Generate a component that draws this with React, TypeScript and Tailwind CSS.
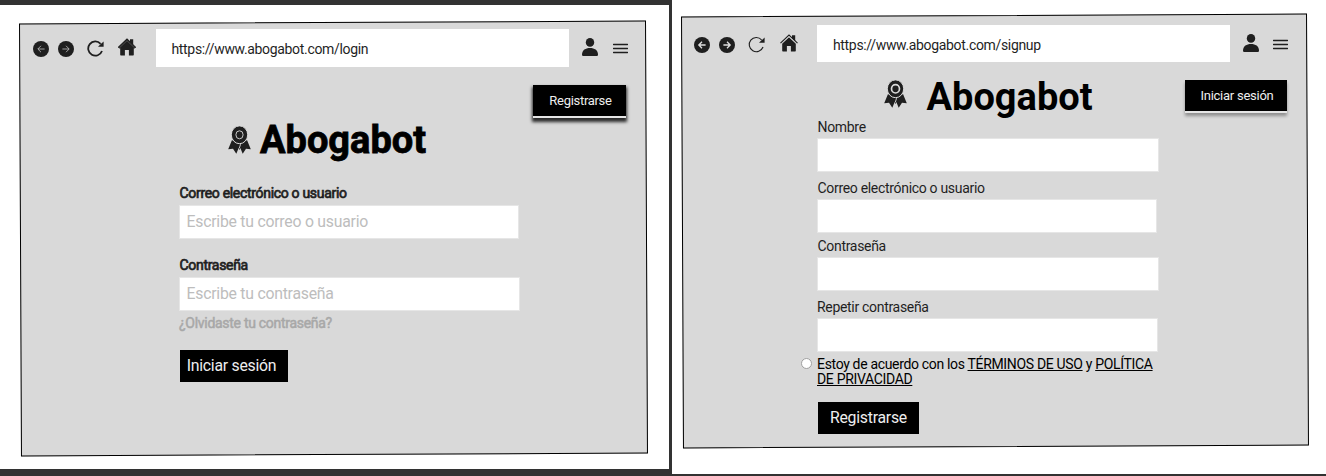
import type { ReactNode } from "react";

function ArrowCircle({ flip = false, strong = false }: { flip?: boolean; strong?: boolean }) {
  return (
    <svg viewBox="0 0 16 16" className={flip ? "size-4 -scale-x-100" : "size-4"}>
      <circle cx="8" cy="8" r="8" fill="#1f1f1f" />
      <path
        d="M11.6 8H5M8 4.8L4.8 8l3.2 3.2"
        fill="none"
        stroke={strong ? "#e0e0e0" : "#c0c0c0"}
        strokeWidth={strong ? 1.3 : 0.8}
      />
    </svg>
  );
}

function Reload({ strong = false }: { strong?: boolean }) {
  return (
    <svg viewBox="0 0 17 17" className="size-[17px]">
      <path
        d="M13.6 3.8A7.1 7.1 0 1 0 15 11"
        fill="none"
        stroke="#1f1f1f"
        strokeWidth={strong ? 1.8 : 1.1}
      />
      <path d="M16.6 1.6v5.2h-5.6l2-2z" fill="#1f1f1f" />
    </svg>
  );
}

function House({ solid = false }: { solid?: boolean }) {
  return (
    <svg viewBox="0 0 18 18" className="size-[18px]">
      <path d="M9 3.2L2.2 9.4V16.8Q2.2 17.5 2.9 17.5H6.9V12H10.9V17.5H15.1Q15.8 17.5 15.8 16.8V9.4Z" fill="#1f1f1f" />
      <path d="M12 1.2H15.2V7L12 4Z" fill="#1f1f1f" />
      <path d={solid ? "M0.5 9.2L9 1.1L17.5 9.2L16 10L9 3.6L2 10Z" : "M0.5 9.1L9 1L17.5 9.1"} fill={solid ? "#1f1f1f" : "none"} stroke="#1f1f1f" strokeWidth="1.1" />
      <path d="M1.4 9.9L9 2.7L16.6 9.9" fill="none" stroke={solid ? "#777" : "#c8c8c8"} strokeWidth={solid ? 0.5 : 0.8} />
    </svg>
  );
}

function Person() {
  return (
    <svg viewBox="0 0 16 18" className="h-[18px] w-4">
      <ellipse cx="8" cy="4.4" rx="4.2" ry="4.4" fill="#1f1f1f" />
      <path d="M0 16.4C0 12 3.6 9.9 8 9.9s8 2.1 8 6.5c0 1-.6 1.6-1.6 1.6H1.6C.6 18 0 17.4 0 16.4z" fill="#1f1f1f" />
    </svg>
  );
}

function Menu() {
  return (
    <svg viewBox="0 0 15 11" className="h-[11px] w-[15px]">
      <path d="M0.5 1.5H14.5M0.5 5.5H14.5M0.5 9.5H14.5" stroke="#1f1f1f" strokeWidth="1.5" strokeLinecap="round" />
    </svg>
  );
}

function Award({ thin = false }: { thin?: boolean }) {
  return (
    <svg viewBox="0 0 23 28" className="h-7 w-[23px]">
      <path d="M4 14L0.2 23.2L5 22.8L8.3 27.8L11.5 20L14.7 27.8L18 22.8L22.8 23.2L19 14L11.5 18Z" fill="#1f1f1f" />
      <path d="M11.5 17L10 21L11.5 24L13 21Z" fill="#1f1f1f" />
      <ellipse cx="11.5" cy="8.8" rx="8.2" ry="8.9" fill="#1f1f1f" stroke="#d9d9d9" strokeWidth="1" />
      <ellipse cx="11.5" cy="8.8" rx={thin ? 3.6 : 4} ry={thin ? 4 : 4.2} fill="none" stroke="#d9d9d9" strokeWidth={thin ? 0.9 : 1.7} />
      <path d="M12.6 18.2L11.2 22.5" stroke="#d9d9d9" strokeWidth="0.9" />
    </svg>
  );
}

function Toolbar({ url, login = false }: { url: string; login?: boolean }) {
  return (
    <div className={login ? "flex h-[38px] pl-[33px]" : "flex h-[37px] pl-[22.4px]"}>
      <div className={login ? "flex items-center pt-[1px]" : "flex items-center pt-[2px]"}>
        <ArrowCircle strong={!login} />
        <div className="ml-[9px]">
          <ArrowCircle flip strong={!login} />
        </div>
        <div className="ml-[13px]">
          <Reload strong={login} />
        </div>
        <div className={login ? "ml-[14.4px] -mt-[3px]" : "ml-[14.5px] -mt-[4px]"}>
          <House solid={login} />
        </div>
      </div>
      <div
        className={
          login
            ? "ml-[19.6px] flex w-[413px] items-center bg-white pl-[15.5px] pt-[3px] text-[14px] tracking-[-0.33px] text-[#1f1f1f]"
            : "ml-[19.1px] flex w-[413px] items-center bg-white pl-4 pt-[4px] text-[14px] tracking-[-0.33px] text-[#1f1f1f]"
        }
      >
        {url}
      </div>
      <div className="flex pl-[13px] pt-[9px]">
        <Person />
        <div className={login ? "ml-[14.9px] mt-[5px]" : "ml-[14.4px] mt-[5px]"}>
          <Menu />
        </div>
      </div>
    </div>
  );
}

function Board({ className, frame, children }: { className: string; frame: string; children: ReactNode }) {
  return (
    <section className={`grid shrink-0 overflow-hidden bg-white ${className}`}>
      <div className={`col-start-1 row-start-1 border border-black bg-[#d9d9d9] -rotate-[0.26deg] ${frame}`} />
      <div className="relative col-start-1 row-start-1 flex flex-col">{children}</div>
    </section>
  );
}

const strokeLabel = "h-4 pl-[0.5px] text-[14px] tracking-[-0.31px] leading-4 text-[#1f1f1f] [-webkit-text-stroke:0.7px_#1f1f1f]";
const label = "h-4 text-[14px] tracking-[-0.31px] leading-4 text-[#1f1f1f]";
const input =
  "h-[34px] border border-[#e6e6e6] bg-white px-[6.5px] pb-[2px] text-[15.8px] tracking-[-0.24px] text-black outline-none placeholder:text-[#bdbdbd] placeholder:opacity-100";

function Login() {
  return (
    <Board className="mt-[5px] h-[464px] w-[669px]" frame="ml-[19.5px] mt-[16.5px] h-[433px] w-[627px]">
      <div className="pt-6">
        <Toolbar url="https://www.abogabot.com/login" login />
      </div>
      <button className="ml-[533px] mt-[18px] h-[33px] w-[93px] border-b-2 border-[#e6e6e6] bg-black pl-[2px] pt-[1px] text-[13px] tracking-[-0.3px] text-[#eee] shadow-[0_3px_3px_1px_#000c]">
        Registrarse
      </button>
      <div className="ml-[228px] mt-2 flex h-7">
        <Award thin />
        <h1 className="ml-[9px] text-[38px] font-bold leading-7 text-black [-webkit-text-stroke:0.8px_black]">Abogabot</h1>
      </div>
      <form className="ml-[179px] mt-[31px] flex w-[342px] flex-col">
        <label className={strokeLabel}>Correo electrónico o usuario</label>
        <input className={`mt-[4px] w-[340px] ${input}`} placeholder="Escribe tu correo o usuario" />
        <label className={`mt-[18px] ${strokeLabel}`}>Contraseña</label>
        <input className={`mt-[4px] w-[341px] ${input}`} placeholder="Escribe tu contraseña" />
        <a className="mt-1 h-4 text-[14px] leading-4 tracking-[-0.29px] text-[#a8a8a8] [-webkit-text-stroke:0.5px_#a8a8a8]">¿Olvidaste tu contraseña?</a>
        <button type="button" className="ml-[1px] mt-[19px] h-8 w-[108px] bg-black pr-[5px] text-[15.8px] tracking-[-0.24px] text-[#eee]">Iniciar sesión</button>
      </form>
    </Board>
  );
}

function Signup() {
  return (
    <Board className="ml-[3px] h-[474px] w-[654px]" frame="ml-[9.5px] mt-[14.5px] h-[432px] w-[626px]">
      <div className="pt-[25px]">
        <Toolbar url="https://www.abogabot.com/signup" />
      </div>
      <div className="ml-[212px] mt-[18px] flex h-9 items-start">
        <Award />
        <h1 className="ml-[19.5px] w-[166.5px] text-[38px] font-bold leading-[34px] text-black">Abogabot</h1>
        <button className="ml-[92px] h-[33px] w-[102px] border-b-2 border-[#e6e6e6] bg-black pl-[2px] pt-[1px] text-[13px] tracking-[-0.25px] text-[#eee] shadow-[0_3px_3px_#0005]">
          Iniciar sesión
        </button>
      </div>
      <form className="ml-[145px] mt-[3px] flex w-[342px] flex-col">
        <label className={`pl-[0.5px] ${label}`}>Nombre</label>
        <input className={`mt-[3px] w-[342px] ${input}`} />
        <label className={`mt-[8px] pl-[0.5px] ${label}`}>Correo electrónico o usuario</label>
        <input className={`mt-[3px] w-[340px] ${input}`} />
        <label className={`mt-[5px] pl-[0.5px] ${label}`}>Contraseña</label>
        <input className={`mt-[3px] w-[342px] ${input}`} />
        <label className={`mt-[8px] ${label}`}>Repetir contraseña</label>
        <input className={`mt-[3px] w-[341px] ${input}`} />
        <div className="-ml-[16px] mt-[5px] flex items-start">
          <span className="mt-[1px] size-[11px] shrink-0 rounded-full border border-[#a0a0a0] bg-white" />
          <p className="ml-[5px] whitespace-nowrap text-[14px] leading-[15px] tracking-[-0.33px] text-black">
            Estoy de acuerdo con los <a className="underline">TÉRMINOS DE USO</a> y <a className="underline">POLÍTICA<br />DE PRIVACIDAD</a>
          </p>
        </div>
        <button type="button" className="ml-[1px] mt-[15px] h-8 w-[101px] bg-black text-[15.8px] tracking-[-0.24px] text-[#eee]">Registrarse</button>
      </form>
    </Board>
  );
}

export default function App() {
  return (
    <main className="flex h-[476px] w-[1326px] overflow-hidden bg-[#323232] font-['Roboto',sans-serif]">
      <Login />
      <Signup />
    </main>
  );
}
